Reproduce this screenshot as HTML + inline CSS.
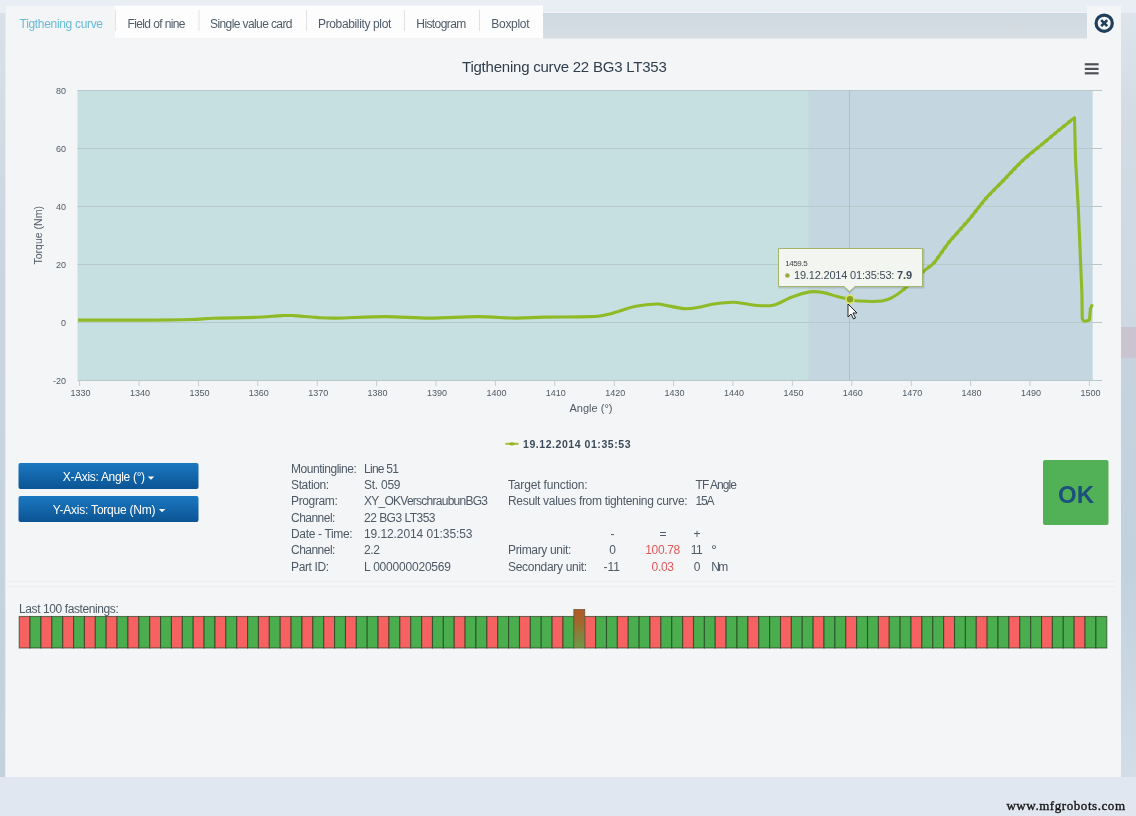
<!DOCTYPE html>
<html><head><meta charset="utf-8">
<style>
*{margin:0;padding:0;box-sizing:border-box}
html,body{width:1136px;height:816px;overflow:hidden}
body{background:#dfe6ee;font-family:"Liberation Sans",sans-serif;position:relative}
svg{position:absolute;left:0;top:0;filter:blur(0.4px)}
text{font-family:"Liberation Sans",sans-serif}
.tab{font-size:12px;fill:#4f5c68}
.tx{font-size:12px;fill:#4d5965}
.red{fill:#e2595a}
.ax{font-size:9px;fill:#4f5a64}
.ttl{font-size:15px;fill:#2f3e4c;letter-spacing:-0.25px}
.btxt{font-size:12px;fill:#fff;letter-spacing:-0.3px}
</style></head><body>
<svg width="1136" height="816">
<defs>
<linearGradient id="mk" x1="0" y1="0" x2="0" y2="1"><stop offset="0" stop-color="#b45a28"/><stop offset="0.3" stop-color="#a5652c"/><stop offset="1" stop-color="#6d9a48"/></linearGradient>
<linearGradient id="btn" x1="0" y1="0" x2="0" y2="1"><stop offset="0" stop-color="#1b78c0"/><stop offset="1" stop-color="#0b5494"/></linearGradient>
<linearGradient id="bg" x1="0" y1="0" x2="0" y2="1"><stop offset="0" stop-color="#e9eef6"/><stop offset="0.05" stop-color="#dde5ee"/><stop offset="0.95" stop-color="#d8e2ec"/><stop offset="1" stop-color="#e2e9f2"/></linearGradient>
<linearGradient id="tb" x1="0" y1="0" x2="0" y2="1"><stop offset="0" stop-color="#cfd9e1"/><stop offset="1" stop-color="#d7dee4"/></linearGradient>
<linearGradient id="ls" x1="0" y1="0" x2="0" y2="1"><stop offset="0" stop-color="#d9e0e8"/><stop offset="0.35" stop-color="#c9d4df"/><stop offset="1" stop-color="#c4d1dd"/></linearGradient>
<linearGradient id="rs1" x1="0" y1="0" x2="0" y2="1"><stop offset="0" stop-color="#dde4ec"/><stop offset="0.3" stop-color="#d3dce5"/><stop offset="1" stop-color="#cdd8e2"/></linearGradient>
<linearGradient id="rs2" x1="0" y1="0" x2="0" y2="1"><stop offset="0" stop-color="#c6d3df"/><stop offset="0.5" stop-color="#c2d1de"/><stop offset="1" stop-color="#d2dde8"/></linearGradient>
</defs>
<rect x="0" y="0" width="1136" height="816" fill="url(#bg)"/>
<rect x="0" y="12" width="6" height="765" fill="url(#ls)"/>
<rect x="5" y="12" width="1" height="765" fill="#e6ebf1"/>
<rect x="1121" y="12" width="15" height="315" fill="url(#rs1)"/>
<rect x="1121" y="327" width="15" height="31" fill="#c9c4d0"/>
<rect x="1121" y="358" width="15" height="419" fill="url(#rs2)"/>
<rect x="0" y="777" width="1136" height="39" fill="#e0e7f0"/>
<!-- dialog -->
<rect x="6" y="6" width="1115" height="771" fill="#f4f5f7"/>
<rect x="0" y="0" width="1136" height="13" fill="#e8eef3"/>
<rect x="6" y="12" width="1081" height="1" fill="#f0f4f8"/>
<rect x="6" y="13" width="1081" height="25.5" fill="url(#tb)"/>
<rect x="6" y="6" width="109" height="33" fill="#f4f5f7"/>
<rect x="115" y="5.5" width="428" height="33" fill="#fdfdfe"/>
<rect x="1087" y="6" width="34" height="33" fill="#f4f5f7"/>
<rect x="115" y="10" width="1" height="21" fill="#dfe3e7"/>
<rect x="198.5" y="10" width="1" height="21" fill="#dfe3e7"/>
<rect x="306" y="10" width="1" height="21" fill="#dfe3e7"/>
<rect x="404" y="10" width="1" height="21" fill="#dfe3e7"/>
<rect x="479" y="10" width="1" height="21" fill="#dfe3e7"/>
<text x="19.6" y="27.5" class="tab" style="fill:#68bbd4" textLength="83.4" lengthAdjust="spacing">Tigthening curve</text>
<text x="127.5" y="27.5" class="tab" textLength="58" lengthAdjust="spacing">Field of nine</text>
<text x="210" y="27.5" class="tab" textLength="82.5" lengthAdjust="spacing">Single value card</text>
<text x="318" y="27.5" class="tab" textLength="73.3" lengthAdjust="spacing">Probability plot</text>
<text x="416.3" y="27.5" class="tab" textLength="50" lengthAdjust="spacing">Histogram</text>
<text x="491.3" y="27.5" class="tab" textLength="38.3" lengthAdjust="spacing">Boxplot</text>
<!-- close icon -->
<circle cx="1104.2" cy="23.2" r="8.1" fill="none" stroke="#1f3f5d" stroke-width="3.2"/>
<path d="M1101.2,20.2 L1107.2,26.2 M1107.2,20.2 L1101.2,26.2" stroke="#1f3f5d" stroke-width="2.6"/>
<!-- title -->
<text x="462" y="71.8" class="ttl" textLength="204.5" lengthAdjust="spacing">Tigthening curve 22 BG3 LT353</text>
<!-- hamburger -->
<rect x="1084.8" y="63.2" width="13.8" height="2.2" fill="#4f5057"/>
<rect x="1084.8" y="67.8" width="13.8" height="2.2" fill="#4f5057"/>
<rect x="1084.8" y="72.2" width="13.8" height="2.2" fill="#4f5057"/>
<!-- plot -->
<rect x="77.5" y="90" width="1015" height="291" fill="#c6dfe1"/>
<rect x="808.5" y="90" width="284" height="291" fill="#c4d6e0"/>
<line x1="77.5" y1="90.5" x2="1102" y2="90.5" stroke="#b8c9cc" stroke-width="1"/><text x="66" y="93.5" text-anchor="end" class="ax">80</text><line x1="77.5" y1="148.5" x2="1102" y2="148.5" stroke="#b8c9cc" stroke-width="1"/><text x="66" y="151.5" text-anchor="end" class="ax">60</text><line x1="77.5" y1="206.5" x2="1102" y2="206.5" stroke="#b8c9cc" stroke-width="1"/><text x="66" y="209.5" text-anchor="end" class="ax">40</text><line x1="77.5" y1="264.5" x2="1102" y2="264.5" stroke="#b8c9cc" stroke-width="1"/><text x="66" y="267.5" text-anchor="end" class="ax">20</text><line x1="77.5" y1="322.5" x2="1102" y2="322.5" stroke="#b8c9cc" stroke-width="1"/><text x="66" y="325.5" text-anchor="end" class="ax">0</text><line x1="77.5" y1="380.5" x2="1102" y2="380.5" stroke="#b8c9cc" stroke-width="1"/><text x="66" y="383.5" text-anchor="end" class="ax">-20</text>
<line x1="849.5" y1="90" x2="849.5" y2="381" stroke="#b0bec8" stroke-width="1"/>
<line x1="79.6" y1="381" x2="79.6" y2="386" stroke="#c5ccd3" stroke-width="1"/><text x="80.6" y="395.8" text-anchor="middle" class="ax">1330</text><line x1="139.0" y1="381" x2="139.0" y2="386" stroke="#c5ccd3" stroke-width="1"/><text x="140.0" y="395.8" text-anchor="middle" class="ax">1340</text><line x1="198.4" y1="381" x2="198.4" y2="386" stroke="#c5ccd3" stroke-width="1"/><text x="199.4" y="395.8" text-anchor="middle" class="ax">1350</text><line x1="257.8" y1="381" x2="257.8" y2="386" stroke="#c5ccd3" stroke-width="1"/><text x="258.8" y="395.8" text-anchor="middle" class="ax">1360</text><line x1="317.2" y1="381" x2="317.2" y2="386" stroke="#c5ccd3" stroke-width="1"/><text x="318.2" y="395.8" text-anchor="middle" class="ax">1370</text><line x1="376.6" y1="381" x2="376.6" y2="386" stroke="#c5ccd3" stroke-width="1"/><text x="377.6" y="395.8" text-anchor="middle" class="ax">1380</text><line x1="436.0" y1="381" x2="436.0" y2="386" stroke="#c5ccd3" stroke-width="1"/><text x="437.0" y="395.8" text-anchor="middle" class="ax">1390</text><line x1="495.4" y1="381" x2="495.4" y2="386" stroke="#c5ccd3" stroke-width="1"/><text x="496.4" y="395.8" text-anchor="middle" class="ax">1400</text><line x1="554.8" y1="381" x2="554.8" y2="386" stroke="#c5ccd3" stroke-width="1"/><text x="555.8" y="395.8" text-anchor="middle" class="ax">1410</text><line x1="614.2" y1="381" x2="614.2" y2="386" stroke="#c5ccd3" stroke-width="1"/><text x="615.2" y="395.8" text-anchor="middle" class="ax">1420</text><line x1="673.6" y1="381" x2="673.6" y2="386" stroke="#c5ccd3" stroke-width="1"/><text x="674.6" y="395.8" text-anchor="middle" class="ax">1430</text><line x1="733.0" y1="381" x2="733.0" y2="386" stroke="#c5ccd3" stroke-width="1"/><text x="734.0" y="395.8" text-anchor="middle" class="ax">1440</text><line x1="792.4" y1="381" x2="792.4" y2="386" stroke="#c5ccd3" stroke-width="1"/><text x="793.4" y="395.8" text-anchor="middle" class="ax">1450</text><line x1="851.8" y1="381" x2="851.8" y2="386" stroke="#c5ccd3" stroke-width="1"/><text x="852.8" y="395.8" text-anchor="middle" class="ax">1460</text><line x1="911.2" y1="381" x2="911.2" y2="386" stroke="#c5ccd3" stroke-width="1"/><text x="912.2" y="395.8" text-anchor="middle" class="ax">1470</text><line x1="970.6" y1="381" x2="970.6" y2="386" stroke="#c5ccd3" stroke-width="1"/><text x="971.6" y="395.8" text-anchor="middle" class="ax">1480</text><line x1="1030.0" y1="381" x2="1030.0" y2="386" stroke="#c5ccd3" stroke-width="1"/><text x="1031.0" y="395.8" text-anchor="middle" class="ax">1490</text><line x1="1089.4" y1="381" x2="1089.4" y2="386" stroke="#c5ccd3" stroke-width="1"/><text x="1090.4" y="395.8" text-anchor="middle" class="ax">1500</text>
<text x="591" y="412" text-anchor="middle" style="font-size:11px;fill:#4f5a64">Angle (°)</text>
<text transform="translate(41.5,235.3) rotate(-90)" text-anchor="middle" style="font-size:10.5px;fill:#4f5a64">Torque (Nm)</text>
<path d="M78,320.1 C89.1,320.1 126.0,320.2 144.7,320.1 C163.4,320.0 179.0,319.8 190.4,319.5 C201.8,319.2 202.6,318.7 213.3,318.3 C224.0,317.9 243.1,317.8 254.5,317.4 C265.9,316.9 275.5,315.9 282.0,315.6 C288.5,315.3 287.7,315.3 293.4,315.6 C299.1,315.9 309.2,317.0 316.3,317.4 C323.4,317.8 324.6,318.2 336.0,318.1 C347.4,318.0 369.1,316.6 384.7,316.6 C400.3,316.6 414.4,318.1 429.8,318.1 C445.2,318.1 463.1,316.6 477.4,316.6 C491.7,316.6 504.3,318.0 515.4,318.1 C526.5,318.2 531.6,317.4 544.0,317.1 C556.4,316.9 579.7,317.0 590.0,316.6 C600.3,316.2 601.0,315.8 606.0,314.8 C611.0,313.9 614.8,312.3 619.8,310.9 C624.8,309.5 629.7,307.4 635.8,306.3 C641.9,305.2 651.4,304.2 656.4,304.0 C661.4,303.8 660.9,304.4 665.5,305.2 C670.1,306.0 678.4,308.2 683.8,308.6 C689.1,309.0 692.6,308.3 697.6,307.5 C702.6,306.7 707.5,304.9 713.6,304.0 C719.7,303.1 727.3,302.0 734.2,302.2 C741.1,302.4 748.3,304.7 754.8,305.2 C761.3,305.7 767.0,306.5 773.1,305.2 C779.2,303.9 785.3,299.4 791.4,297.2 C797.5,295.0 804.4,292.7 809.7,291.9 C815.1,291.1 818.9,291.8 823.5,292.6 C828.1,293.4 832.8,295.4 837.2,296.5 C841.6,297.6 846.3,298.6 850.0,299.3 C853.7,300.1 854.3,300.7 859.6,301.0 C864.9,301.3 876.2,301.7 881.8,301.0 C887.4,300.3 889.3,299.0 893.0,297.0 C896.7,295.0 899.1,293.3 904.1,289.1 C909.1,284.9 918.3,276.0 923.3,271.6 C928.3,267.2 930.0,267.4 934.3,262.5 C938.6,257.6 943.3,249.3 949.0,242.2 C954.7,235.1 962.5,227.4 968.6,220.1 C974.7,212.8 980.1,205.0 985.8,198.5 C991.5,192.0 996.8,187.2 1002.9,180.9 C1009.0,174.6 1016.0,166.7 1022.5,160.6 C1029.0,154.5 1036.1,149.2 1042.2,144.1 C1048.3,139.0 1053.9,134.3 1059.3,129.9 C1064.7,125.5 1072.0,119.6 1074.5,117.6 L1075.5,158.8 L1078.4,210.3 L1081.9,293.6 L1082.2,317.6 Q1082.5,321.5 1085.6,321.2 L1089.5,320 L1090.4,308.8 L1092.4,304.4" fill="none" stroke="#8fba26" stroke-width="3.1" stroke-linejoin="round" stroke-linecap="butt"/>
<circle cx="904.1" cy="289.1" r="1.9" fill="#8fba26"/><circle cx="908.9" cy="284.7" r="1.9" fill="#8fba26"/><circle cx="913.7" cy="280.4" r="1.9" fill="#8fba26"/><circle cx="918.5" cy="276.0" r="1.9" fill="#8fba26"/><circle cx="923.3" cy="271.6" r="1.9" fill="#8fba26"/><circle cx="928.8" cy="267.1" r="1.9" fill="#8fba26"/><circle cx="934.3" cy="262.5" r="1.9" fill="#8fba26"/><circle cx="938.0" cy="257.4" r="1.9" fill="#8fba26"/><circle cx="941.6" cy="252.3" r="1.9" fill="#8fba26"/><circle cx="945.3" cy="247.3" r="1.9" fill="#8fba26"/><circle cx="949.0" cy="242.2" r="1.9" fill="#8fba26"/><circle cx="952.9" cy="237.8" r="1.9" fill="#8fba26"/><circle cx="956.8" cy="233.4" r="1.9" fill="#8fba26"/><circle cx="960.8" cy="228.9" r="1.9" fill="#8fba26"/><circle cx="964.7" cy="224.5" r="1.9" fill="#8fba26"/><circle cx="968.6" cy="220.1" r="1.9" fill="#8fba26"/><circle cx="972.0" cy="215.8" r="1.9" fill="#8fba26"/><circle cx="975.5" cy="211.5" r="1.9" fill="#8fba26"/><circle cx="978.9" cy="207.1" r="1.9" fill="#8fba26"/><circle cx="982.4" cy="202.8" r="1.9" fill="#8fba26"/><circle cx="985.8" cy="198.5" r="1.9" fill="#8fba26"/><circle cx="990.1" cy="194.1" r="1.9" fill="#8fba26"/><circle cx="994.3" cy="189.7" r="1.9" fill="#8fba26"/><circle cx="998.6" cy="185.3" r="1.9" fill="#8fba26"/><circle cx="1002.9" cy="180.9" r="1.9" fill="#8fba26"/><circle cx="1006.8" cy="176.8" r="1.9" fill="#8fba26"/><circle cx="1010.7" cy="172.8" r="1.9" fill="#8fba26"/><circle cx="1014.7" cy="168.7" r="1.9" fill="#8fba26"/><circle cx="1018.6" cy="164.7" r="1.9" fill="#8fba26"/><circle cx="1022.5" cy="160.6" r="1.9" fill="#8fba26"/><circle cx="1027.4" cy="156.5" r="1.9" fill="#8fba26"/><circle cx="1032.3" cy="152.3" r="1.9" fill="#8fba26"/><circle cx="1037.3" cy="148.2" r="1.9" fill="#8fba26"/><circle cx="1042.2" cy="144.1" r="1.9" fill="#8fba26"/><circle cx="1046.5" cy="140.6" r="1.9" fill="#8fba26"/><circle cx="1050.8" cy="137.0" r="1.9" fill="#8fba26"/><circle cx="1055.0" cy="133.4" r="1.9" fill="#8fba26"/><circle cx="1059.3" cy="129.9" r="1.9" fill="#8fba26"/><circle cx="1064.4" cy="125.8" r="1.9" fill="#8fba26"/><circle cx="1069.4" cy="121.7" r="1.9" fill="#8fba26"/>
<!-- tooltip -->
<path d="M779.5,249.5 H923.5 V287.5 H855 L849.5,292.5 L844,287.5 H779.5 Z" fill="none" stroke="#000" stroke-opacity="0.12" stroke-width="2"/>
<path d="M778.5,248.5 H922.5 V286.5 H855 L849.5,291.5 L844,286.5 H778.5 Z" fill="#f3f5f1" fill-opacity="1" stroke="#a3b56a" stroke-width="1"/>
<text x="785.2" y="265.5" textLength="22.5" lengthAdjust="spacing" style="font-size:8px;fill:#3a3f44">1459.5</text>
<circle cx="787.4" cy="275.5" r="2.3" fill="#9aab45"/>
<text x="794" y="278.5" textLength="118" lengthAdjust="spacing" style="font-size:11px;fill:#3d4a57">19.12.2014 01:35:53: <tspan style="font-weight:bold">7.9</tspan></text>
<circle cx="850" cy="299.3" r="4" fill="#8a9d2a" stroke="#d8e860" stroke-width="1.5"/>
<!-- cursor -->
<path d="M848,304 L848,317 L851,314 L853.5,319 L855.5,318 L853,313 L857,313 Z" fill="#fff" stroke="#222" stroke-width="1"/>
<!-- legend -->
<line x1="505.3" y1="443.8" x2="518.5" y2="443.8" stroke="#a5bf35" stroke-width="2"/>
<ellipse cx="512" cy="443.8" rx="3" ry="1.6" fill="#98b22c"/>
<text x="523" y="447.5" textLength="107.5" lengthAdjust="spacing" style="font-size:10.5px;font-weight:bold;fill:#3d4a57">19.12.2014 01:35:53</text>
<!-- buttons -->
<rect x="18.5" y="463" width="180" height="26" rx="2" fill="url(#btn)"/>
<rect x="18.5" y="496" width="180" height="26" rx="2" fill="url(#btn)"/>
<text x="62.8" y="480.8" class="btxt" textLength="82" lengthAdjust="spacing">X-Axis: Angle (°)</text>
<path d="M147.8,476.4 L154.2,476.4 L151,479.8 Z" fill="#fff"/>
<text x="52.8" y="513.6" class="btxt" textLength="102.5" lengthAdjust="spacing">Y-Axis: Torque (Nm)</text>
<path d="M158.9,508.9 L165.3,508.9 L162.1,512.3 Z" fill="#fff"/>
<text x="291" y="472.7" class="tx" textLength="65.8" lengthAdjust="spacing">Mountingline:</text>
<text x="364" y="472.7" class="tx" textLength="35" lengthAdjust="spacing">Line 51</text>
<text x="291" y="489.0" class="tx" textLength="38.2" lengthAdjust="spacing">Station:</text>
<text x="364" y="489.0" class="tx" textLength="36.5" lengthAdjust="spacing">St. 059</text>
<text x="291" y="505.4" class="tx" textLength="46.8" lengthAdjust="spacing">Program:</text>
<text x="364" y="505.4" class="tx" textLength="124" lengthAdjust="spacing">XY_OKVerschraubunBG3</text>
<text x="291" y="521.7" class="tx" textLength="44.4" lengthAdjust="spacing">Channel:</text>
<text x="364" y="521.7" class="tx" textLength="71.5" lengthAdjust="spacing">22 BG3 LT353</text>
<text x="291" y="538.0" class="tx" textLength="61.6" lengthAdjust="spacing">Date - Time:</text>
<text x="364" y="538.0" class="tx" textLength="108.5" lengthAdjust="spacing">19.12.2014 01:35:53</text>
<text x="291" y="554.4" class="tx" textLength="44.4" lengthAdjust="spacing">Channel:</text>
<text x="364" y="554.4" class="tx" textLength="16" lengthAdjust="spacing">2.2</text>
<text x="291" y="570.7" class="tx" textLength="38.2" lengthAdjust="spacing">Part ID:</text>
<text x="364" y="570.7" class="tx" textLength="87" lengthAdjust="spacing">L 000000020569</text>
<text x="508" y="489.0" class="tx" textLength="79.7" lengthAdjust="spacing">Target function:</text>
<text x="508" y="505.4" class="tx" textLength="179.6" lengthAdjust="spacing">Result values from tightening curve:</text>
<text x="695.5" y="489.0" class="tx" textLength="41.5" lengthAdjust="spacing">TF Angle</text>
<text x="695.5" y="505.4" class="tx" textLength="19" lengthAdjust="spacing">15A</text>
<text x="508" y="554.4" class="tx" textLength="63.4" lengthAdjust="spacing">Primary unit:</text>
<text x="508" y="570.7" class="tx" textLength="79.2" lengthAdjust="spacing">Secondary unit:</text>
<text x="612.5" y="538.0" class="tx" text-anchor="middle">-</text>
<text x="663" y="538.0" class="tx" text-anchor="middle">=</text>
<text x="697" y="538.0" class="tx" text-anchor="middle">+</text>
<text x="612.5" y="554.4" class="tx" text-anchor="middle">0</text>
<text x="645.3" y="554.4" class="tx red" textLength="34.9" lengthAdjust="spacing">100.78</text>
<text x="690.7" y="554.4" class="tx" textLength="11.9" lengthAdjust="spacing">11</text>
<text x="711" y="555.4" class="tx" style="font-size:15px">°</text>
<text x="603.5" y="570.7" class="tx" textLength="16.4" lengthAdjust="spacing">-11</text>
<text x="651.6" y="570.7" class="tx red" textLength="22.4" lengthAdjust="spacing">0.03</text>
<text x="697" y="570.7" class="tx" text-anchor="middle">0</text>
<text x="711.3" y="570.7" class="tx" textLength="16.9" lengthAdjust="spacing">Nm</text>
<!-- OK -->
<rect x="1043" y="460" width="65.5" height="65" rx="2" fill="#52b157"/>
<text x="1076" y="503" text-anchor="middle" style="font-size:24px;font-weight:bold;fill:#1c4f7c">OK</text>
<!-- separator -->
<line x1="6" y1="581.5" x2="1115" y2="581.5" stroke="#eceef1" stroke-width="1"/>
<line x1="6" y1="586.5" x2="1115" y2="586.5" stroke="#eceef1" stroke-width="1"/>
<text x="19" y="612.5" class="tx" textLength="99.8" lengthAdjust="spacing">Last 100 fastenings:</text>
<rect x="19.20" y="616.5" width="10.88" height="31.5" fill="#f66262" stroke="#1e3218" stroke-opacity="0.62" stroke-width="1.1"/>
<rect x="30.08" y="616.5" width="10.88" height="31.5" fill="#4aae4e" stroke="#1e3218" stroke-opacity="0.62" stroke-width="1.1"/>
<rect x="40.95" y="616.5" width="10.88" height="31.5" fill="#f66262" stroke="#1e3218" stroke-opacity="0.62" stroke-width="1.1"/>
<rect x="51.83" y="616.5" width="10.88" height="31.5" fill="#4aae4e" stroke="#1e3218" stroke-opacity="0.62" stroke-width="1.1"/>
<rect x="62.70" y="616.5" width="10.88" height="31.5" fill="#f66262" stroke="#1e3218" stroke-opacity="0.62" stroke-width="1.1"/>
<rect x="73.58" y="616.5" width="10.88" height="31.5" fill="#4aae4e" stroke="#1e3218" stroke-opacity="0.62" stroke-width="1.1"/>
<rect x="84.46" y="616.5" width="10.88" height="31.5" fill="#f66262" stroke="#1e3218" stroke-opacity="0.62" stroke-width="1.1"/>
<rect x="95.33" y="616.5" width="10.88" height="31.5" fill="#4aae4e" stroke="#1e3218" stroke-opacity="0.62" stroke-width="1.1"/>
<rect x="106.21" y="616.5" width="10.88" height="31.5" fill="#f66262" stroke="#1e3218" stroke-opacity="0.62" stroke-width="1.1"/>
<rect x="117.08" y="616.5" width="10.88" height="31.5" fill="#4aae4e" stroke="#1e3218" stroke-opacity="0.62" stroke-width="1.1"/>
<rect x="127.96" y="616.5" width="10.88" height="31.5" fill="#f66262" stroke="#1e3218" stroke-opacity="0.62" stroke-width="1.1"/>
<rect x="138.84" y="616.5" width="10.88" height="31.5" fill="#4aae4e" stroke="#1e3218" stroke-opacity="0.62" stroke-width="1.1"/>
<rect x="149.71" y="616.5" width="10.88" height="31.5" fill="#f66262" stroke="#1e3218" stroke-opacity="0.62" stroke-width="1.1"/>
<rect x="160.59" y="616.5" width="10.88" height="31.5" fill="#4aae4e" stroke="#1e3218" stroke-opacity="0.62" stroke-width="1.1"/>
<rect x="171.46" y="616.5" width="10.88" height="31.5" fill="#f66262" stroke="#1e3218" stroke-opacity="0.62" stroke-width="1.1"/>
<rect x="182.34" y="616.5" width="10.88" height="31.5" fill="#4aae4e" stroke="#1e3218" stroke-opacity="0.62" stroke-width="1.1"/>
<rect x="193.22" y="616.5" width="10.88" height="31.5" fill="#f66262" stroke="#1e3218" stroke-opacity="0.62" stroke-width="1.1"/>
<rect x="204.09" y="616.5" width="10.88" height="31.5" fill="#4aae4e" stroke="#1e3218" stroke-opacity="0.62" stroke-width="1.1"/>
<rect x="214.97" y="616.5" width="10.88" height="31.5" fill="#f66262" stroke="#1e3218" stroke-opacity="0.62" stroke-width="1.1"/>
<rect x="225.84" y="616.5" width="10.88" height="31.5" fill="#4aae4e" stroke="#1e3218" stroke-opacity="0.62" stroke-width="1.1"/>
<rect x="236.72" y="616.5" width="10.88" height="31.5" fill="#f66262" stroke="#1e3218" stroke-opacity="0.62" stroke-width="1.1"/>
<rect x="247.60" y="616.5" width="10.88" height="31.5" fill="#4aae4e" stroke="#1e3218" stroke-opacity="0.62" stroke-width="1.1"/>
<rect x="258.47" y="616.5" width="10.88" height="31.5" fill="#f66262" stroke="#1e3218" stroke-opacity="0.62" stroke-width="1.1"/>
<rect x="269.35" y="616.5" width="10.88" height="31.5" fill="#4aae4e" stroke="#1e3218" stroke-opacity="0.62" stroke-width="1.1"/>
<rect x="280.22" y="616.5" width="10.88" height="31.5" fill="#f66262" stroke="#1e3218" stroke-opacity="0.62" stroke-width="1.1"/>
<rect x="291.10" y="616.5" width="10.88" height="31.5" fill="#4aae4e" stroke="#1e3218" stroke-opacity="0.62" stroke-width="1.1"/>
<rect x="301.98" y="616.5" width="10.88" height="31.5" fill="#f66262" stroke="#1e3218" stroke-opacity="0.62" stroke-width="1.1"/>
<rect x="312.85" y="616.5" width="10.88" height="31.5" fill="#4aae4e" stroke="#1e3218" stroke-opacity="0.62" stroke-width="1.1"/>
<rect x="323.73" y="616.5" width="10.88" height="31.5" fill="#f66262" stroke="#1e3218" stroke-opacity="0.62" stroke-width="1.1"/>
<rect x="334.60" y="616.5" width="10.88" height="31.5" fill="#4aae4e" stroke="#1e3218" stroke-opacity="0.62" stroke-width="1.1"/>
<rect x="345.48" y="616.5" width="10.88" height="31.5" fill="#f66262" stroke="#1e3218" stroke-opacity="0.62" stroke-width="1.1"/>
<rect x="356.36" y="616.5" width="10.88" height="31.5" fill="#4aae4e" stroke="#1e3218" stroke-opacity="0.62" stroke-width="1.1"/>
<rect x="367.23" y="616.5" width="10.88" height="31.5" fill="#4aae4e" stroke="#1e3218" stroke-opacity="0.62" stroke-width="1.1"/>
<rect x="378.11" y="616.5" width="10.88" height="31.5" fill="#f66262" stroke="#1e3218" stroke-opacity="0.62" stroke-width="1.1"/>
<rect x="388.98" y="616.5" width="10.88" height="31.5" fill="#4aae4e" stroke="#1e3218" stroke-opacity="0.62" stroke-width="1.1"/>
<rect x="399.86" y="616.5" width="10.88" height="31.5" fill="#f66262" stroke="#1e3218" stroke-opacity="0.62" stroke-width="1.1"/>
<rect x="410.74" y="616.5" width="10.88" height="31.5" fill="#4aae4e" stroke="#1e3218" stroke-opacity="0.62" stroke-width="1.1"/>
<rect x="421.61" y="616.5" width="10.88" height="31.5" fill="#f66262" stroke="#1e3218" stroke-opacity="0.62" stroke-width="1.1"/>
<rect x="432.49" y="616.5" width="10.88" height="31.5" fill="#4aae4e" stroke="#1e3218" stroke-opacity="0.62" stroke-width="1.1"/>
<rect x="443.36" y="616.5" width="10.88" height="31.5" fill="#4aae4e" stroke="#1e3218" stroke-opacity="0.62" stroke-width="1.1"/>
<rect x="454.24" y="616.5" width="10.88" height="31.5" fill="#f66262" stroke="#1e3218" stroke-opacity="0.62" stroke-width="1.1"/>
<rect x="465.12" y="616.5" width="10.88" height="31.5" fill="#4aae4e" stroke="#1e3218" stroke-opacity="0.62" stroke-width="1.1"/>
<rect x="475.99" y="616.5" width="10.88" height="31.5" fill="#4aae4e" stroke="#1e3218" stroke-opacity="0.62" stroke-width="1.1"/>
<rect x="486.87" y="616.5" width="10.88" height="31.5" fill="#f66262" stroke="#1e3218" stroke-opacity="0.62" stroke-width="1.1"/>
<rect x="497.74" y="616.5" width="10.88" height="31.5" fill="#4aae4e" stroke="#1e3218" stroke-opacity="0.62" stroke-width="1.1"/>
<rect x="508.62" y="616.5" width="10.88" height="31.5" fill="#4aae4e" stroke="#1e3218" stroke-opacity="0.62" stroke-width="1.1"/>
<rect x="519.50" y="616.5" width="10.88" height="31.5" fill="#f66262" stroke="#1e3218" stroke-opacity="0.62" stroke-width="1.1"/>
<rect x="530.37" y="616.5" width="10.88" height="31.5" fill="#4aae4e" stroke="#1e3218" stroke-opacity="0.62" stroke-width="1.1"/>
<rect x="541.25" y="616.5" width="10.88" height="31.5" fill="#4aae4e" stroke="#1e3218" stroke-opacity="0.62" stroke-width="1.1"/>
<rect x="552.12" y="616.5" width="10.88" height="31.5" fill="#f66262" stroke="#1e3218" stroke-opacity="0.62" stroke-width="1.1"/>
<rect x="563.00" y="616.5" width="10.88" height="31.5" fill="#4aae4e" stroke="#1e3218" stroke-opacity="0.62" stroke-width="1.1"/>
<rect x="584.75" y="616.5" width="10.88" height="31.5" fill="#f66262" stroke="#1e3218" stroke-opacity="0.62" stroke-width="1.1"/>
<rect x="595.63" y="616.5" width="10.88" height="31.5" fill="#4aae4e" stroke="#1e3218" stroke-opacity="0.62" stroke-width="1.1"/>
<rect x="606.50" y="616.5" width="10.88" height="31.5" fill="#4aae4e" stroke="#1e3218" stroke-opacity="0.62" stroke-width="1.1"/>
<rect x="617.38" y="616.5" width="10.88" height="31.5" fill="#f66262" stroke="#1e3218" stroke-opacity="0.62" stroke-width="1.1"/>
<rect x="628.26" y="616.5" width="10.88" height="31.5" fill="#4aae4e" stroke="#1e3218" stroke-opacity="0.62" stroke-width="1.1"/>
<rect x="639.13" y="616.5" width="10.88" height="31.5" fill="#4aae4e" stroke="#1e3218" stroke-opacity="0.62" stroke-width="1.1"/>
<rect x="650.01" y="616.5" width="10.88" height="31.5" fill="#f66262" stroke="#1e3218" stroke-opacity="0.62" stroke-width="1.1"/>
<rect x="660.88" y="616.5" width="10.88" height="31.5" fill="#4aae4e" stroke="#1e3218" stroke-opacity="0.62" stroke-width="1.1"/>
<rect x="671.76" y="616.5" width="10.88" height="31.5" fill="#4aae4e" stroke="#1e3218" stroke-opacity="0.62" stroke-width="1.1"/>
<rect x="682.64" y="616.5" width="10.88" height="31.5" fill="#f66262" stroke="#1e3218" stroke-opacity="0.62" stroke-width="1.1"/>
<rect x="693.51" y="616.5" width="10.88" height="31.5" fill="#4aae4e" stroke="#1e3218" stroke-opacity="0.62" stroke-width="1.1"/>
<rect x="704.39" y="616.5" width="10.88" height="31.5" fill="#4aae4e" stroke="#1e3218" stroke-opacity="0.62" stroke-width="1.1"/>
<rect x="715.26" y="616.5" width="10.88" height="31.5" fill="#f66262" stroke="#1e3218" stroke-opacity="0.62" stroke-width="1.1"/>
<rect x="726.14" y="616.5" width="10.88" height="31.5" fill="#4aae4e" stroke="#1e3218" stroke-opacity="0.62" stroke-width="1.1"/>
<rect x="737.02" y="616.5" width="10.88" height="31.5" fill="#4aae4e" stroke="#1e3218" stroke-opacity="0.62" stroke-width="1.1"/>
<rect x="747.89" y="616.5" width="10.88" height="31.5" fill="#f66262" stroke="#1e3218" stroke-opacity="0.62" stroke-width="1.1"/>
<rect x="758.77" y="616.5" width="10.88" height="31.5" fill="#4aae4e" stroke="#1e3218" stroke-opacity="0.62" stroke-width="1.1"/>
<rect x="769.64" y="616.5" width="10.88" height="31.5" fill="#4aae4e" stroke="#1e3218" stroke-opacity="0.62" stroke-width="1.1"/>
<rect x="780.52" y="616.5" width="10.88" height="31.5" fill="#f66262" stroke="#1e3218" stroke-opacity="0.62" stroke-width="1.1"/>
<rect x="791.40" y="616.5" width="10.88" height="31.5" fill="#4aae4e" stroke="#1e3218" stroke-opacity="0.62" stroke-width="1.1"/>
<rect x="802.27" y="616.5" width="10.88" height="31.5" fill="#4aae4e" stroke="#1e3218" stroke-opacity="0.62" stroke-width="1.1"/>
<rect x="813.15" y="616.5" width="10.88" height="31.5" fill="#f66262" stroke="#1e3218" stroke-opacity="0.62" stroke-width="1.1"/>
<rect x="824.02" y="616.5" width="10.88" height="31.5" fill="#4aae4e" stroke="#1e3218" stroke-opacity="0.62" stroke-width="1.1"/>
<rect x="834.90" y="616.5" width="10.88" height="31.5" fill="#4aae4e" stroke="#1e3218" stroke-opacity="0.62" stroke-width="1.1"/>
<rect x="845.78" y="616.5" width="10.88" height="31.5" fill="#f66262" stroke="#1e3218" stroke-opacity="0.62" stroke-width="1.1"/>
<rect x="856.65" y="616.5" width="10.88" height="31.5" fill="#4aae4e" stroke="#1e3218" stroke-opacity="0.62" stroke-width="1.1"/>
<rect x="867.53" y="616.5" width="10.88" height="31.5" fill="#4aae4e" stroke="#1e3218" stroke-opacity="0.62" stroke-width="1.1"/>
<rect x="878.40" y="616.5" width="10.88" height="31.5" fill="#f66262" stroke="#1e3218" stroke-opacity="0.62" stroke-width="1.1"/>
<rect x="889.28" y="616.5" width="10.88" height="31.5" fill="#4aae4e" stroke="#1e3218" stroke-opacity="0.62" stroke-width="1.1"/>
<rect x="900.16" y="616.5" width="10.88" height="31.5" fill="#4aae4e" stroke="#1e3218" stroke-opacity="0.62" stroke-width="1.1"/>
<rect x="911.03" y="616.5" width="10.88" height="31.5" fill="#f66262" stroke="#1e3218" stroke-opacity="0.62" stroke-width="1.1"/>
<rect x="921.91" y="616.5" width="10.88" height="31.5" fill="#4aae4e" stroke="#1e3218" stroke-opacity="0.62" stroke-width="1.1"/>
<rect x="932.78" y="616.5" width="10.88" height="31.5" fill="#4aae4e" stroke="#1e3218" stroke-opacity="0.62" stroke-width="1.1"/>
<rect x="943.66" y="616.5" width="10.88" height="31.5" fill="#f66262" stroke="#1e3218" stroke-opacity="0.62" stroke-width="1.1"/>
<rect x="954.54" y="616.5" width="10.88" height="31.5" fill="#4aae4e" stroke="#1e3218" stroke-opacity="0.62" stroke-width="1.1"/>
<rect x="965.41" y="616.5" width="10.88" height="31.5" fill="#4aae4e" stroke="#1e3218" stroke-opacity="0.62" stroke-width="1.1"/>
<rect x="976.29" y="616.5" width="10.88" height="31.5" fill="#f66262" stroke="#1e3218" stroke-opacity="0.62" stroke-width="1.1"/>
<rect x="987.16" y="616.5" width="10.88" height="31.5" fill="#4aae4e" stroke="#1e3218" stroke-opacity="0.62" stroke-width="1.1"/>
<rect x="998.04" y="616.5" width="10.88" height="31.5" fill="#4aae4e" stroke="#1e3218" stroke-opacity="0.62" stroke-width="1.1"/>
<rect x="1008.92" y="616.5" width="10.88" height="31.5" fill="#f66262" stroke="#1e3218" stroke-opacity="0.62" stroke-width="1.1"/>
<rect x="1019.79" y="616.5" width="10.88" height="31.5" fill="#4aae4e" stroke="#1e3218" stroke-opacity="0.62" stroke-width="1.1"/>
<rect x="1030.67" y="616.5" width="10.88" height="31.5" fill="#4aae4e" stroke="#1e3218" stroke-opacity="0.62" stroke-width="1.1"/>
<rect x="1041.54" y="616.5" width="10.88" height="31.5" fill="#f66262" stroke="#1e3218" stroke-opacity="0.62" stroke-width="1.1"/>
<rect x="1052.42" y="616.5" width="10.88" height="31.5" fill="#4aae4e" stroke="#1e3218" stroke-opacity="0.62" stroke-width="1.1"/>
<rect x="1063.30" y="616.5" width="10.88" height="31.5" fill="#4aae4e" stroke="#1e3218" stroke-opacity="0.62" stroke-width="1.1"/>
<rect x="1074.17" y="616.5" width="10.88" height="31.5" fill="#f66262" stroke="#1e3218" stroke-opacity="0.62" stroke-width="1.1"/>
<rect x="1085.05" y="616.5" width="10.88" height="31.5" fill="#4aae4e" stroke="#1e3218" stroke-opacity="0.62" stroke-width="1.1"/>
<rect x="1095.92" y="616.5" width="10.88" height="31.5" fill="#4aae4e" stroke="#1e3218" stroke-opacity="0.62" stroke-width="1.1"/>
<rect x="573.88" y="609.5" width="10.88" height="38.5" fill="url(#mk)" stroke="#6a5a3a" stroke-width="0.8"/>
<text x="1006.4" y="810" textLength="118.6" lengthAdjust="spacing" style="font-family:'Liberation Serif',serif;font-size:13px;fill:#151515;stroke:#151515;stroke-width:0.35px">www.mfgrobots.com</text>
</svg>
</body></html>
